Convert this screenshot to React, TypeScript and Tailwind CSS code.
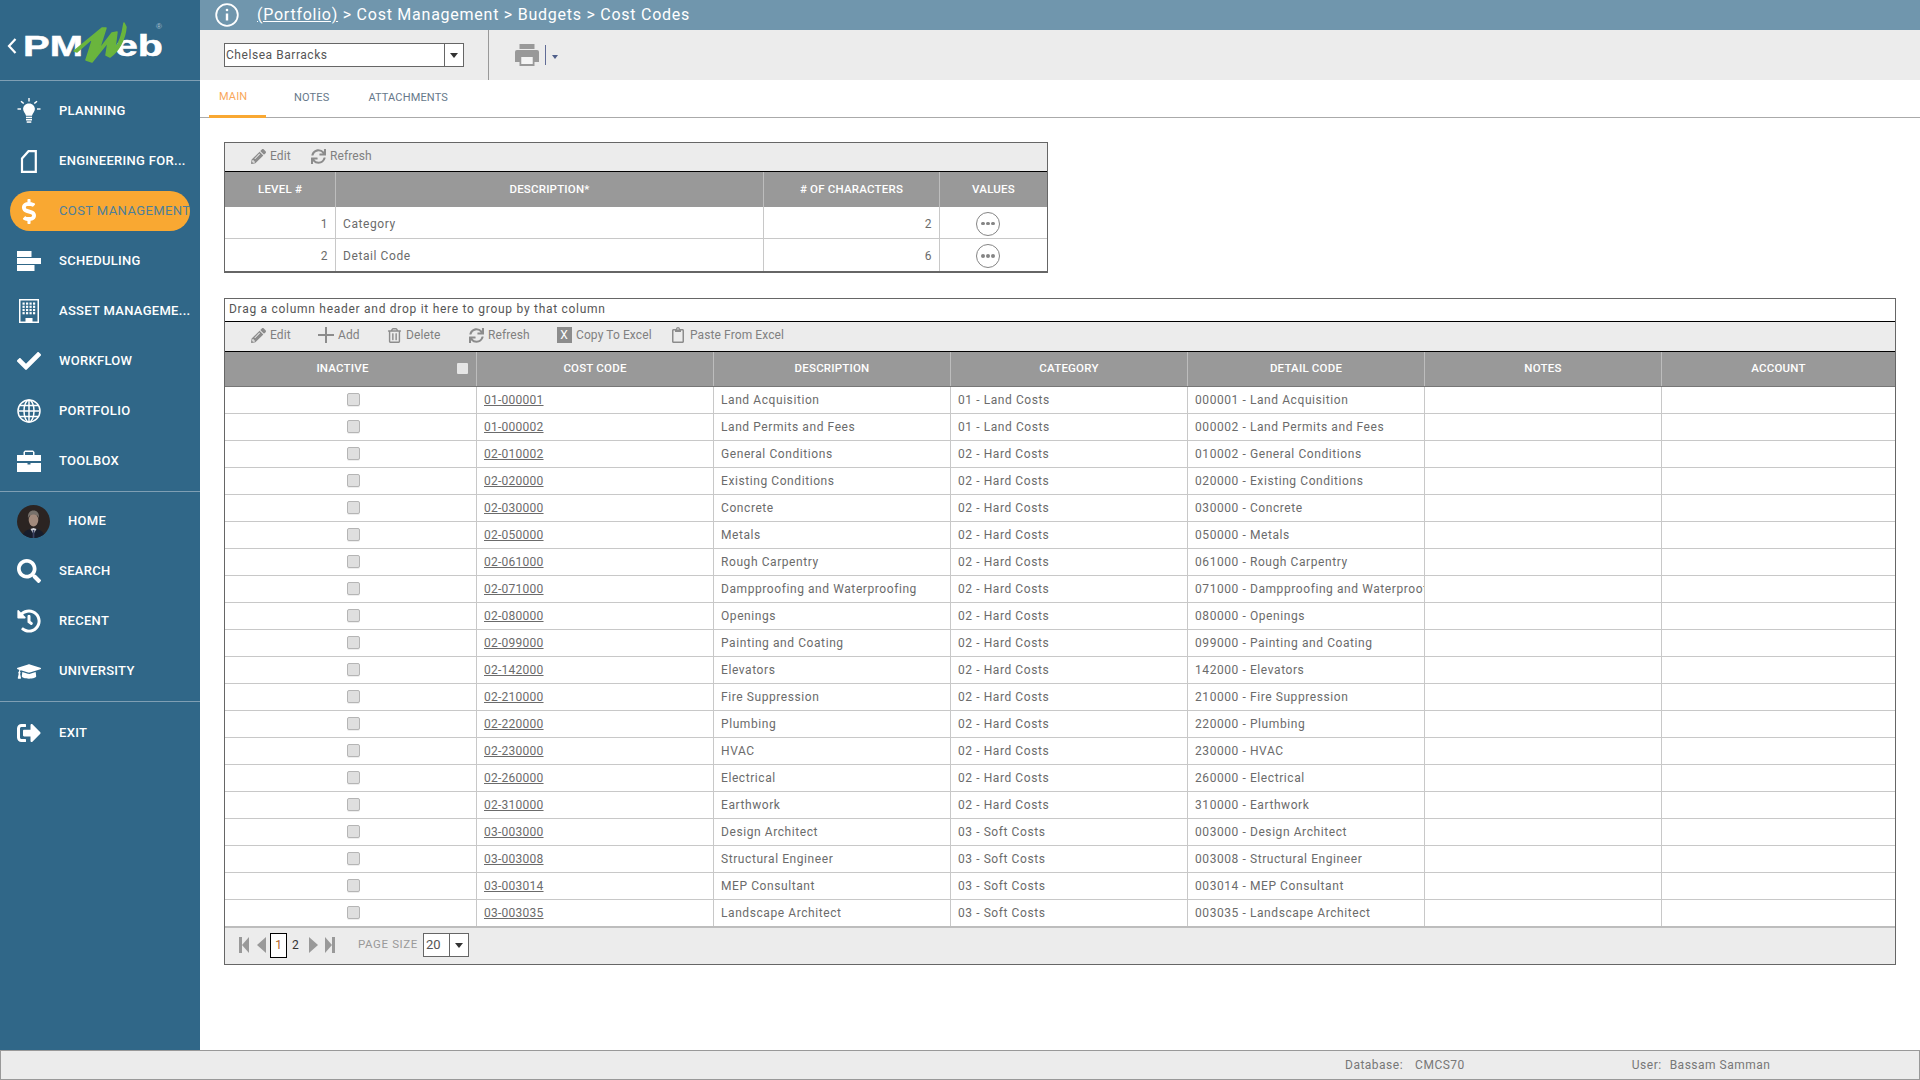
import React from 'react'
import { FaDollarSign, FaCheck, FaSearch, FaHistory, FaGraduationCap, FaSignOutAlt, FaPencilAlt, FaSync, FaRegTrashAlt, FaRegClipboard } from 'react-icons/fa'

interface costRow {
  code: string;
  description: string;
  category: string;
  detail: string;
}

const rows: costRow[] = [
  { code: '01-000001', description: 'Land Acquisition', category: '01 - Land Costs', detail: '000001 - Land Acquisition' },
  { code: '01-000002', description: 'Land Permits and Fees', category: '01 - Land Costs', detail: '000002 - Land Permits and Fees' },
  { code: '02-010002', description: 'General Conditions', category: '02 - Hard Costs', detail: '010002 - General Conditions' },
  { code: '02-020000', description: 'Existing Conditions', category: '02 - Hard Costs', detail: '020000 - Existing Conditions' },
  { code: '02-030000', description: 'Concrete', category: '02 - Hard Costs', detail: '030000 - Concrete' },
  { code: '02-050000', description: 'Metals', category: '02 - Hard Costs', detail: '050000 - Metals' },
  { code: '02-061000', description: 'Rough Carpentry', category: '02 - Hard Costs', detail: '061000 - Rough Carpentry' },
  { code: '02-071000', description: 'Dampproofing and Waterproofing', category: '02 - Hard Costs', detail: '071000 - Dampproofing and Waterproofing' },
  { code: '02-080000', description: 'Openings', category: '02 - Hard Costs', detail: '080000 - Openings' },
  { code: '02-099000', description: 'Painting and Coating', category: '02 - Hard Costs', detail: '099000 - Painting and Coating' },
  { code: '02-142000', description: 'Elevators', category: '02 - Hard Costs', detail: '142000 - Elevators' },
  { code: '02-210000', description: 'Fire Suppression', category: '02 - Hard Costs', detail: '210000 - Fire Suppression' },
  { code: '02-220000', description: 'Plumbing', category: '02 - Hard Costs', detail: '220000 - Plumbing' },
  { code: '02-230000', description: 'HVAC', category: '02 - Hard Costs', detail: '230000 - HVAC' },
  { code: '02-260000', description: 'Electrical', category: '02 - Hard Costs', detail: '260000 - Electrical' },
  { code: '02-310000', description: 'Earthwork', category: '02 - Hard Costs', detail: '310000 - Earthwork' },
  { code: '03-003000', description: 'Design Architect', category: '03 - Soft Costs', detail: '003000 - Design Architect' },
  { code: '03-003008', description: 'Structural Engineer', category: '03 - Soft Costs', detail: '003008 - Structural Engineer' },
  { code: '03-003014', description: 'MEP Consultant', category: '03 - Soft Costs', detail: '003014 - MEP Consultant' },
  { code: '03-003035', description: 'Landscape Architect', category: '03 - Soft Costs', detail: '003035 - Landscape Architect' },
]

const Bulb = () => (
  <svg width="24" height="26" viewBox="0 0 24 26" fill="white">
    <path d="M12 5.500c-3.600 0-5.900 2.500-5.900 5.500 0 2.800 2.400 4 2.900 6.800h6c.5-2.800 2.900-4 2.900-6.800 0-3-2.300-5.500-5.900-5.500z" />
    <rect x="9" y="18.700" width="6" height="1.500" />
    <rect x="9" y="21" width="6" height="1.500" />
    <rect x="9.700" y="23.300" width="4.600" height="1.500" />
    <rect x="11.300" y="0" width="1.400" height="3.500" />
    <rect x="0.500" y="10.300" width="3.500" height="1.400" />
    <rect x="20" y="10.300" width="3.500" height="1.400" />
    <path d="M3.500 3.800l1-1 2.700 2.300-1 1zM20.500 3.800l-1-1-2.700 2.300 1 1z" />
  </svg>
)

const Doc = () => (
  <svg width="24" height="26" viewBox="0 0 24 26" fill="none" stroke="white" strokeWidth="2.200">
    <path d="M5 10.500l6.500-7.300h7.300v20.600H5z" />
  </svg>
)

const Bars = () => (
  <svg width="24" height="20" viewBox="0 0 24 20" fill="white">
    <rect x="0" y="0" width="14.500" height="6" />
    <rect x="0" y="7" width="24" height="6" />
    <rect x="0" y="14" width="17.500" height="6" />
  </svg>
)

const Building = () => (
  <svg width="20" height="24" viewBox="0 0 20 24">
    <path fill="white" fillRule="evenodd" d="M0 0h20v24H0zM1.500 1.500v21h5v-3.500h7v3.500h5v-21z" />
    {[3.500, 7, 10.500, 14].map((x) =>
      [3.500, 6.700, 9.900, 13.100].map((y) => <rect key={`${x}-${y}`} x={x} y={y} width="2.200" height="2.200" fill="white" />)
    )}
  </svg>
)

const Globe = () => (
  <svg width="24" height="24" viewBox="0 0 24 24" fill="none" stroke="white" strokeWidth="1.500">
    <circle cx="12" cy="12" r="11" />
    <ellipse cx="12" cy="12" rx="5" ry="11" />
    <path d="M12 1v22M1.500 12h21M3 6.500h18M3 17.500h18" />
  </svg>
)

const Briefcase = () => (
  <svg width="24" height="22" viewBox="0 0 24 22" fill="white">
    <path fillRule="evenodd" d="M8 0.500h8l1.500 1.500v3H24v6H0V5h6.500V2zM8 2v3h8V2z" />
    <path d="M0 13h10.500v1.500h3V13H24v9H0z" />
  </svg>
)

const Printer = () => (
  <svg width="24" height="24" viewBox="0 0 24 24" fill="#999">
    <rect x="4.500" y="1" width="15" height="5" />
    <path fillRule="evenodd" d="M2 7h20a2 2 0 0 1 2 2v10h-4.500v4h-15v-4H0V9a2 2 0 0 1 2-2zM6.500 14v7h11v-7z" />
    <rect x="6.500" y="14" width="11" height="7" fill="#f5f5f5" />
  </svg>
)

const Avatar = () => (
  <svg width="33" height="33" viewBox="0 0 33 33" className="rounded-full">
    <rect width="33" height="33" fill="#2b2422" />
    <path d="M5 33c1-7 5-8.500 11.500-9.500C23 24.500 27 26 28 33z" fill="#171c2b" />
    <path d="M13.500 24l3 5 3-5-3-1z" fill="#cfd0d6" />
    <rect x="15.700" y="25" width="1.700" height="8" fill="#3a4060" />
    <ellipse cx="16.500" cy="15" rx="4.800" ry="6.500" fill="#a28a7c" />
    <path d="M11 13.500C10.500 8 13 5.500 16.500 5.500S22.500 8 22 13.500c-.7-2.500-2-4-5.500-4s-4.800 1.500-5.500 4z" fill="#77716b" />
  </svg>
)

const Logo = () => (
  <svg width="200" height="80" viewBox="0 0 200 80">
    <path d="M15.500 39l-6.500 7 6.500 7" fill="none" stroke="white" strokeWidth="2.200" />
    <text x="23" y="55.500" fontFamily="Liberation Sans, sans-serif" fontWeight="700" fontSize="29" fill="white" stroke="white" strokeWidth="0.500" textLength="60" lengthAdjust="spacingAndGlyphs">PM</text>
    <text x="115" y="55.500" fontFamily="Liberation Sans, sans-serif" fontWeight="700" fontSize="29" fill="white" stroke="white" strokeWidth="0.500" textLength="48" lengthAdjust="spacingAndGlyphs">eb</text>
    <path d="M74 51L102 28L106 28L99 50L112 33L117 32L115 48C119 44 122 36 124 23L126 27C125 40 118 52 110 57L106 55L108 42L92 62L86 60L93 38L77 52Z" fill="#6ab53d" stroke="#6ab53d" strokeWidth="1.500" strokeLinejoin="round" />
    <text x="156" y="29" fontFamily="Liberation Sans, sans-serif" fontSize="8" fill="#a9c0ce">®</text>
  </svg>
)

const navTop = [
  { label: 'PLANNING', icon: <Bulb /> },
  { label: 'ENGINEERING FOR...', icon: <Doc /> },
  { label: 'COST MANAGEMENT', icon: <FaDollarSign size={25} color="white" />, active: true },
  { label: 'SCHEDULING', icon: <Bars /> },
  { label: 'ASSET MANAGEME...', icon: <Building /> },
  { label: 'WORKFLOW', icon: <FaCheck size={24} color="white" /> },
  { label: 'PORTFOLIO', icon: <Globe /> },
  { label: 'TOOLBOX', icon: <Briefcase /> },
]

const navBottom = [
  { label: 'SEARCH', icon: <FaSearch size={24} color="white" /> },
  { label: 'RECENT', icon: <FaHistory size={24} color="white" /> },
  { label: 'UNIVERSITY', icon: <FaGraduationCap size={25} color="white" /> },
]

const NavItem = ({ label, icon, active }: { label: string; icon: React.ReactNode; active?: boolean }) => (
  <div className={active ? 'flex items-center h-[40px] my-[5px] mx-[10px] rounded-full bg-[#f9a832] pl-[7px]' : 'flex items-center h-[50px] pl-[17px]'}>
    <div className="w-[24px] flex justify-center shrink-0">{icon}</div>
    <span className={active ? 'ml-[18px] text-[13px] whitespace-nowrap text-[#4d7f9a] tracking-[0.4px]' : 'ml-[18px] text-[13px] font-medium whitespace-nowrap text-white tracking-[0.3px]'}>
      {label}
    </span>
  </div>
)

const Sidebar = () => (
  <aside className="w-[200px] shrink-0 bg-[#306788] flex flex-col font-['Roboto',sans-serif]">
    <div className="h-[81px] border-b border-[#7f9fb4]">
      <Logo />
    </div>
    <div className="pt-[5px] h-[411px] border-b border-[#7f9fb4]">
      {navTop.map((n) => (
        <NavItem key={n.label} {...n} />
      ))}
    </div>
    <div className="flex items-center h-[54px] pl-[17px] pt-[4px]">
      <Avatar />
      <span className="ml-[18px] text-[13px] font-medium text-white tracking-[0.3px]">HOME</span>
    </div>
    <div className="h-[156px] border-b border-[#7f9fb4]">
      {navBottom.map((n) => (
        <NavItem key={n.label} {...n} />
      ))}
    </div>
    <div className="pt-[6px]">
      <NavItem label="EXIT" icon={<FaSignOutAlt size={24} color="white" />} />
    </div>
  </aside>
)

const ToolItem = ({ icon, label, className }: { icon: React.ReactNode; label: string; className: string }) => (
  <div className={`flex items-center ${className}`}>
    <div className="w-[16px] h-[16px] flex items-center justify-center text-[#8c8c8c]">{icon}</div>
    <span className="text-[12px] text-[#808080] ml-[4px] tracking-[0.1px] whitespace-nowrap">{label}</span>
  </div>
)

const PlusIcon = () => (
  <svg width="16" height="16" viewBox="0 0 16 16" fill="#8c8c8c">
    <rect x="7" y="0" width="2" height="16" />
    <rect x="0" y="7" width="16" height="2" />
  </svg>
)

const Check = () => <div className="w-[13px] h-[13px] -mt-[1px] rounded-[2px] bg-[#dfdfdf] border border-[#b5b5b5] shadow-[0_1px_0_#eee]" />

const Dots = () => (
  <div className="w-[24px] h-[24px] rounded-full border border-[#858585] flex items-center justify-center gap-[1.5px]">
    <span className="w-[3.5px] h-[3.5px] rounded-full bg-[#858585]" />
    <span className="w-[3.5px] h-[3.5px] rounded-full bg-[#858585]" />
    <span className="w-[3.5px] h-[3.5px] rounded-full bg-[#858585]" />
  </div>
)

const Caret = () => <div className="w-0 h-0 border-l-[4.5px] border-r-[4.5px] border-t-[5px] border-l-transparent border-r-transparent border-t-[#333]" />

const levelCols = 'grid grid-cols-[111px_428px_176px_1fr]'
const costCols = 'grid grid-cols-[252px_237px_237px_237px_237px_237px_1fr]'
const headCell = 'flex items-center justify-center border-r border-[#bdbdbd] last:border-r-0 text-[11.5px] font-medium text-white tracking-[0.2px]'
const cell = 'flex items-center px-[7px] border-r border-[#c8c8c8] last:border-r-0 overflow-hidden whitespace-nowrap text-[12px] text-[#6b6b6b] tracking-[0.58px]'

const LevelTable = () => (
  <div className="w-[824px] border border-[#666] border-b-2">
    <div className="h-[29px] bg-[#ececec] border-b border-black flex items-center pl-[25px] pb-[2px]">
      <ToolItem icon={<FaPencilAlt size={15} />} label="Edit" className="w-[60px]" />
      <ToolItem icon={<FaSync size={15} />} label="Refresh" className="" />
    </div>
    <div className={`${levelCols} h-[35px] bg-[#999]`}>
      <div className={headCell}>LEVEL #</div>
      <div className={headCell}>DESCRIPTION*</div>
      <div className={headCell}>
        # OF CHARACTERS
      </div>
      <div className={headCell}>VALUES</div>
    </div>
    {[
      { level: 1, name: 'Category', chars: 2 },
      { level: 2, name: 'Detail Code', chars: 6 },
    ].map((r, i) => (
      <div key={r.level} className={i === 0 ? `${levelCols} h-[32px] border-b border-[#c8c8c8]` : `${levelCols} h-[32px]`}>
        <div className={`${cell} justify-end pt-[2px]`}>{r.level}</div>
        <div className={`${cell} pt-[2px]`}>{r.name}</div>
        <div className={`${cell} justify-end pt-[2px]`}>{r.chars}</div>
        <div className={`${cell} justify-center pr-[18px] pt-[2px]`}>
          <Dots />
        </div>
      </div>
    ))}
  </div>
)

const CostTable = () => (
  <div className="mt-[25px] w-[1672px] border border-[#666]">
    <div className="h-[23px] flex items-center pl-[4px] pb-[3px] border-b border-black text-[12px] text-[#555] tracking-[0.72px]">
      Drag a column header and drop it here to group by that column
    </div>
    <div className="h-[30px] bg-[#ececec] border-b border-black flex items-center pl-[25px] pb-[3px]">
      <ToolItem icon={<FaPencilAlt size={15} />} label="Edit" className="w-[68px]" />
      <ToolItem icon={<PlusIcon />} label="Add" className="w-[68px]" />
      <ToolItem icon={<FaRegTrashAlt size={15} />} label="Delete" className="w-[82px]" />
      <ToolItem icon={<FaSync size={15} />} label="Refresh" className="w-[88px]" />
      <ToolItem
        icon={<div className="w-[15px] h-[16px] bg-[#8c8c8c] text-white text-[12px] flex items-center justify-center">X</div>}
        label="Copy To Excel"
        className="w-[114px]"
      />
      <ToolItem icon={<FaRegClipboard size={16} />} label="Paste From Excel" className="" />
    </div>
    <div className={`${costCols} h-[35px] bg-[#999] border-b border-[#777]`}>
      <div className={`${headCell} relative pr-[16px]`}>
        INACTIVE
        <div className="absolute right-[8px] top-[11px] w-[11px] h-[11px] bg-[#e6e6e6] rounded-[1px]" />
      </div>
      {['COST CODE', 'DESCRIPTION', 'CATEGORY', 'DETAIL CODE', 'NOTES', 'ACCOUNT'].map((h) => (
        <div key={h} className={headCell}>
          {h}
        </div>
      ))}
    </div>
    {rows.map((r) => (
      <div key={r.code} className={`${costCols} h-[27px] border-b border-[#c8c8c8]`}>
        <div className={`${cell} justify-center pl-[12px]`}>
          <Check />
        </div>
        <div className={cell}>
          <a className="underline -mt-[1px] tracking-[0.25px]">{r.code}</a>
        </div>
        <div className={cell}>{r.description}</div>
        <div className={cell}>{r.category}</div>
        <div className={cell}>{r.detail}</div>
        <div className={cell} />
        <div className={cell} />
      </div>
    ))}
    <div className="h-[38px] bg-[#ececec] flex items-center pl-[14px] pb-[2px] border-t-2 border-[#bdbdbd] -mt-px">
      <svg width="10" height="16" viewBox="0 0 10 16" fill="#999">
        <rect x="0" y="0" width="3" height="16" />
        <path d="M10 0v16L3 8z" />
      </svg>
      <svg className="ml-[8px]" width="9" height="16" viewBox="0 0 9 16" fill="#999">
        <path d="M9 0v16L0 8z" />
      </svg>
      <div className="ml-[4px] w-[17px] h-[25px] border border-black bg-white flex items-center justify-center text-[12px] text-[#b5651d]">1</div>
      <span className="ml-[5px] w-[12px] text-[12px] text-[#333]">2</span>
      <svg className="ml-[5px]" width="9" height="16" viewBox="0 0 9 16" fill="#999">
        <path d="M0 0v16L9 8z" />
      </svg>
      <svg className="ml-[7px]" width="10" height="16" viewBox="0 0 10 16" fill="#999">
        <path d="M0 0v16L7 8z" />
        <rect x="7" y="0" width="3" height="16" />
      </svg>
      <span className="ml-[23px] text-[11.5px] text-[#999] tracking-[0.6px]">PAGE SIZE</span>
      <div className="ml-[5px] w-[46px] h-[24px] border border-[#666] bg-white flex items-center text-[13px] text-[#555]">
        <span className="flex-1 pl-[2px]">20</span>
        <div className="w-[19px] h-full border-l border-[#666] flex items-center justify-center">
          <Caret />
        </div>
      </div>
    </div>
  </div>
)

export default function App() {
  return (
    <div className="w-[1920px] h-[1080px] flex flex-col overflow-hidden bg-white font-['Roboto',sans-serif]">
      <div className="flex flex-1 min-h-0">
        <Sidebar />
        <main className="flex-1 min-w-0 flex flex-col">
          <div className="h-[30px] bg-[#7096ad] flex items-center pl-[15px]">
            <svg width="24" height="24" viewBox="0 0 24 24" fill="none" stroke="white" strokeWidth="1.800">
              <circle cx="12" cy="12" r="10.800" />
              <path d="M12 10.500v7" strokeWidth="2.400" />
              <circle cx="12" cy="7" r="1.300" fill="white" stroke="none" />
            </svg>
            <div className="ml-[18px] text-[16px] text-white tracking-[0.75px] whitespace-nowrap">
              <span className="underline">(Portfolio)</span> &gt; Cost Management &gt; Budgets &gt; Cost Codes
            </div>
          </div>
          <div className="h-[50px] bg-[#ececec] flex items-center pl-[24px]">
            <div className="w-[240px] h-[24px] border border-[#666] bg-white flex items-center text-[12px] text-[#555] tracking-[0.55px]">
              <span className="flex-1 pl-[1px]">Chelsea Barracks</span>
              <div className="w-[19px] h-full border-l border-[#666] flex items-center justify-center">
                <Caret />
              </div>
            </div>
            <div className="ml-[24px] h-full w-px bg-[#999]" />
            <div className="ml-[26px]">
              <Printer />
            </div>
            <div className="ml-[6px] h-[20px] w-px bg-[#606c96]" />
            <div className="ml-[6px] mt-[4px] w-0 h-0 border-l-[3.5px] border-r-[3.5px] border-t-[4px] border-l-transparent border-r-transparent border-t-[#4f5f8a]" />
          </div>
          <div className="h-[38px] border-b border-[#aaa] flex items-stretch pl-[9px] text-[11px] tracking-[0.15px]">
            <div className="w-[57px] flex items-center pl-[10px] text-[#f9a85a] border-b-[3px] border-[#f9a832] pb-[1px] -mb-px">MAIN</div>
            <div className="ml-[28px] flex items-center pb-[1px] text-[#66788a]">NOTES</div>
            <div className="ml-[39px] flex items-center pb-[1px] text-[#66788a]">ATTACHMENTS</div>
          </div>
          <div className="pl-[24px] pt-[24px]">
            <LevelTable />
            <CostTable />
          </div>
        </main>
      </div>
      <div className="h-[30px] bg-[#ececec] border border-[#999] flex items-center text-[12px] text-[#777] tracking-[0.5px]">
        <span className="ml-[1344px]">Database:</span>
        <span className="ml-[12px]">CMCS70</span>
        <span className="ml-[167px]">User:</span>
        <span className="ml-[8px]">Bassam Samman</span>
      </div>
    </div>
  )
}
